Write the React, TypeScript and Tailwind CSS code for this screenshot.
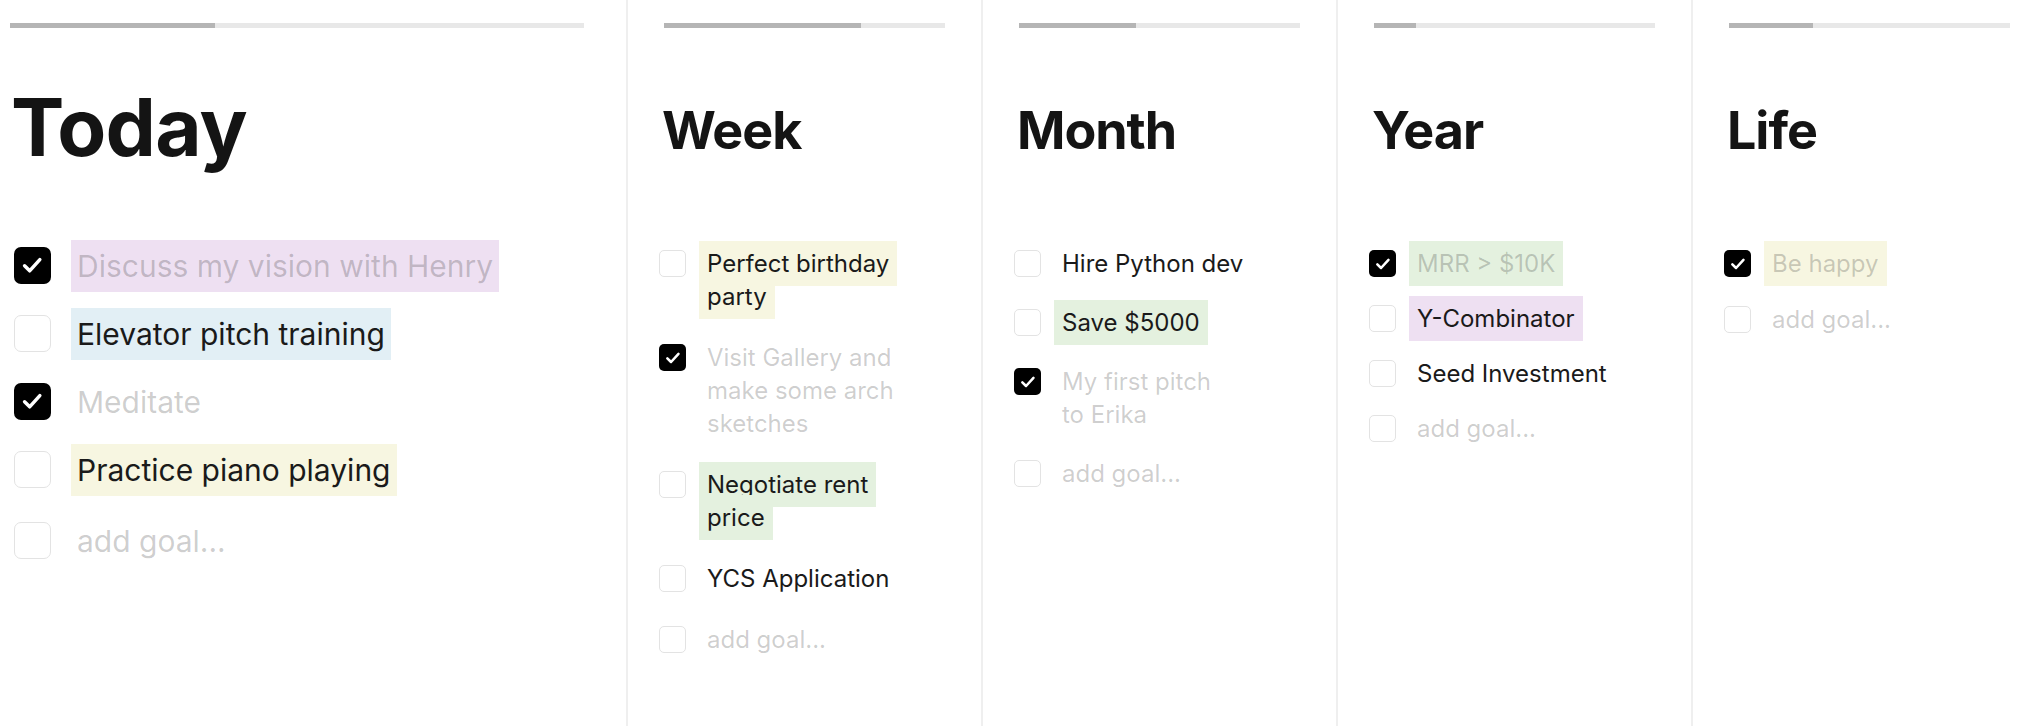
import type { ReactNode } from "react";

type Tint = "purple" | "blue" | "yellow" | "green" | "none";

interface Goal {
  text: string;
  done?: boolean;
  tint?: Tint;
  placeholder?: boolean;
}

interface Horizon {
  title: string;
  progress: number;
  // vertical gap between goals, differs a bit per column in the mock
  gap: string;
  goals: Goal[];
}

const TINT_BG: Record<Tint, string> = {
  purple: "bg-[#eee0f2]",
  blue: "bg-[#e2eff5]",
  yellow: "bg-[#f7f6e1]",
  green: "bg-[#e4f1df]",
  none: ""
};

const TODAY: Horizon = {
  title: "Today",
  progress: 35.7,
  gap: "gap-[17px]",
  goals: [
    { text: "Discuss my vision with Henry", done: true, tint: "purple" },
    { text: "Elevator pitch training", tint: "blue" },
    { text: "Meditate", done: true },
    { text: "Practice piano playing", tint: "yellow" },
    { text: "add goal...", placeholder: true }
  ]
};

const HORIZONS: Horizon[] = [
  {
    title: "Week",
    progress: 70,
    gap: "gap-[28px]",
    goals: [
      { text: "Perfect birthday party", tint: "yellow" },
      { text: "Visit Gallery and make some arch sketches", done: true },
      { text: "Negotiate rent price", tint: "green" },
      { text: "YCS Application" },
      { text: "add goal...", placeholder: true }
    ]
  },
  {
    title: "Month",
    progress: 41.6,
    gap: "gap-[26px]",
    goals: [
      { text: "Hire Python dev" },
      { text: "Save $5000", tint: "green" },
      { text: "My first pitch\nto Erika", done: true },
      { text: "add goal...", placeholder: true }
    ]
  },
  {
    title: "Year",
    progress: 15,
    gap: "gap-[22px]",
    goals: [
      { text: "MRR > $10K", done: true, tint: "green" },
      { text: "Y-Combinator", tint: "purple" },
      { text: "Seed Investment" },
      { text: "add goal...", placeholder: true }
    ]
  },
  {
    title: "Life",
    progress: 30,
    gap: "gap-[23px]",
    goals: [
      { text: "Be happy", done: true, tint: "yellow" },
      { text: "add goal...", placeholder: true }
    ]
  }
];

function ProgressBar({ value }: { value: number }) {
  return (
    <div className="h-[5px] w-full bg-[#e8e8e8]">
      <div className="h-full bg-[#b5b5b5]" style={{ width: `${value}%` }} />
    </div>
  );
}

function Checkbox({ checked, large }: { checked?: boolean; large?: boolean }) {
  const size = large ? "h-[37px] w-[37px] rounded-[7px]" : "h-[27px] w-[27px] rounded-[5px]";
  if (checked) {
    return (
      <span className={`${size} flex shrink-0 items-center justify-center bg-black`}>
        <svg viewBox="0 0 24 24" className="h-[66%] w-[66%]" fill="none">
          <path
            d="M4.5 12.5l5 5L19.5 6.5"
            stroke="white"
            strokeWidth={3.4}
            strokeLinecap="round"
            strokeLinejoin="round"
          />
        </svg>
      </span>
    );
  }
  return <span className={`${size} block shrink-0 border-[1.5px] border-[#e3e3e3] bg-white`} />;
}

function GoalText({ goal, large }: { goal: Goal; large?: boolean }): ReactNode {
  const faded = goal.done || goal.placeholder;
  const color = faded ? "text-black/20" : "text-[#1a1a1a]";
  const pad = large ? "px-[6px] py-2" : "px-2 py-2";
  return (
    <span className={`${pad} ${TINT_BG[goal.tint ?? "none"]} ${color} box-decoration-clone`}>
      {goal.text}
    </span>
  );
}

function TodayColumn({ horizon }: { horizon: Horizon }) {
  return (
    <section className="flex w-[626px] shrink-0 flex-col pt-[23px] pr-[42px] pl-[10px]">
      <ProgressBar value={horizon.progress} />
      <h1 className="mt-[59px] ml-[1px] text-[80px] leading-none font-bold tracking-[-0.01em] text-[#141414]">
        {horizon.title}
      </h1>
      <ul className={`mt-[73px] ml-[4px] flex flex-col ${horizon.gap}`}>
        {horizon.goals.map((goal) => (
          <li
            key={goal.text}
            className={`flex h-[51px] items-center gap-5 ${goal.placeholder ? "mt-[3px]" : ""}`}
          >
            <Checkbox checked={goal.done} large />
            <div className="text-[30px] leading-[36px] whitespace-nowrap">
              <GoalText goal={goal} large />
            </div>
          </li>
        ))}
      </ul>
    </section>
  );
}

function HorizonColumn({ horizon }: { horizon: Horizon }) {
  return (
    <section className="flex w-[355px] shrink-0 flex-col border-l-2 border-[#efefef] px-9 pt-[23px]">
      <ProgressBar value={horizon.progress} />
      <h2 className="mt-[77px] -ml-[2px] text-[52px] leading-none font-bold tracking-[-0.02em] text-[#141414]">
        {horizon.title}
      </h2>
      <ul className={`mt-[90px] -ml-[5px] flex flex-col pr-[20px] ${horizon.gap}`}>
        {horizon.goals.map((goal) => (
          <li key={goal.text} className="flex items-start gap-[13px]">
            <span className="mt-[3px]">
              <Checkbox checked={goal.done} />
            </span>
            <div className="min-w-0 flex-1 text-[24px] leading-[33px] whitespace-pre-line">
              <GoalText goal={goal} />
            </div>
          </li>
        ))}
      </ul>
    </section>
  );
}

export default function App() {
  return (
    <div className="h-[726px] w-full overflow-hidden bg-white font-['Inter','Noto_Sans',sans-serif] antialiased">
      <div className="flex h-full w-[2046px]">
        <TodayColumn horizon={TODAY} />
        {HORIZONS.map((h) => (
          <HorizonColumn key={h.title} horizon={h} />
        ))}
      </div>
    </div>
  );
}
